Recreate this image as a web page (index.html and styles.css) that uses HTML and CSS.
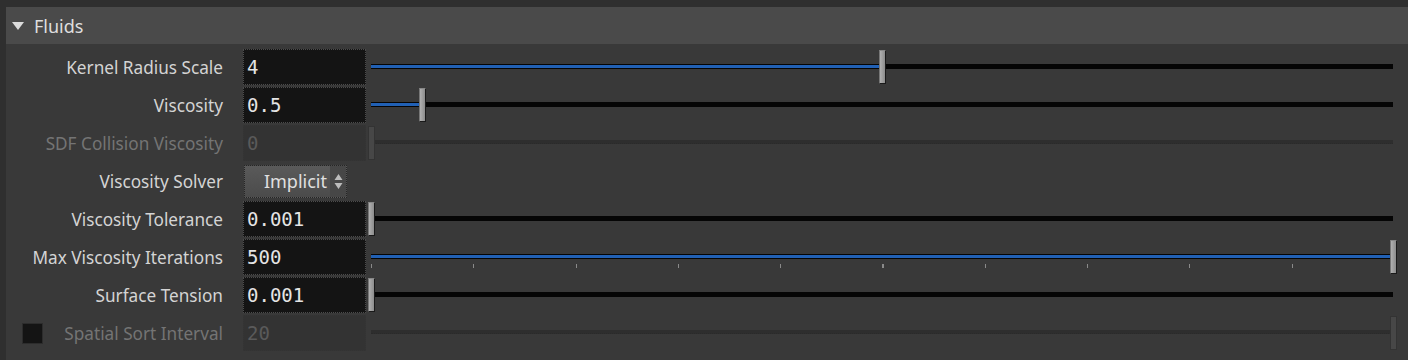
FILE: index.html
```html
<!DOCTYPE html>
<html lang="en">
<head>
    <meta charset="UTF-8">
    <title>Fluids</title>
    <link rel="stylesheet" href="styles.css">
</head>
<body>
    <div class="panel">
        <div class="folder-head">
            <span class="arrow"></span>
            <span class="folder-title">Fluids</span>
        </div>
        <div class="parms">
            <div class="row">
                <div class="label">Kernel Radius Scale</div>
                <div class="field">4</div>
                <div class="slider">
                    <div class="track"><div class="fill" style="width: 50%"></div></div>
                    <div class="handle" style="left: 50%"></div>
                </div>
            </div>
            <div class="row">
                <div class="label">Viscosity</div>
                <div class="field">0.5</div>
                <div class="slider">
                    <div class="track"><div class="fill" style="width: 5%"></div></div>
                    <div class="handle" style="left: 5%"></div>
                </div>
            </div>
            <div class="row disabled">
                <div class="label">SDF Collision Viscosity</div>
                <div class="field">0</div>
                <div class="slider">
                    <div class="track"></div>
                    <div class="handle" style="left: 0%"></div>
                </div>
            </div>
            <div class="row">
                <div class="label">Viscosity Solver</div>
                <div class="menu">
                    <span class="menu-text">Implicit</span>
                    <span class="menu-arrows">
                        <svg width="9" height="17" viewBox="0 0 9 17"><path d="M4.5 1 L8.5 7 L0.5 7 Z M4.5 16 L8.5 10 L0.5 10 Z" fill="#bcbcbc"/></svg>
                    </span>
                </div>
            </div>
            <div class="row">
                <div class="label">Viscosity Tolerance</div>
                <div class="field">0.001</div>
                <div class="slider">
                    <div class="track"></div>
                    <div class="handle" style="left: 0%"></div>
                </div>
            </div>
            <div class="row">
                <div class="label">Max Viscosity Iterations</div>
                <div class="field">500</div>
                <div class="slider">
                    <div class="track"><div class="fill" style="width: 100%"></div></div>
                    <div class="ticks"></div>
                    <div class="handle" style="left: 100%"></div>
                </div>
            </div>
            <div class="row">
                <div class="label">Surface Tension</div>
                <div class="field">0.001</div>
                <div class="slider">
                    <div class="track"></div>
                    <div class="handle" style="left: 0%"></div>
                </div>
            </div>
            <div class="row disabled">
                <div class="label">
                    <span class="checkbox"></span>
                    <span>Spatial Sort Interval</span>
                </div>
                <div class="field">20</div>
                <div class="slider">
                    <div class="track"></div>
                    <div class="handle" style="left: 100%"></div>
                </div>
            </div>
        </div>
    </div>
</body>
</html>
```

FILE: styles.css
```css
body {
    margin: 0;
    background-color: #2f2f2f;
    font-family: "Noto Sans", sans-serif;
    font-size: 17.2px;
    color: #d4d4d4;
    overflow: hidden;
}
.panel {
    padding-top: 7px;
    padding-left: 6px;
}
.folder-head {
    height: 37px;
    background-color: #4a4a4a;
    display: flex;
    align-items: center;
    padding-left: 6px;
}
.arrow {
    width: 0;
    height: 0;
    border-left: 6px solid transparent;
    border-right: 6px solid transparent;
    border-top: 8px solid #dcdcdc;
    margin-right: 10px;
}
.folder-title {
    color: #dedede;
    font-size: 18px;
}
.parms {
    background-color: #393939;
    padding-top: 4px;
    padding-bottom: 8px;
}
.row {
    height: 38px;
    display: flex;
    align-items: center;
}
.label {
    width: 217px;
    padding-right: 20px;
    display: flex;
    justify-content: flex-end;
    align-items: center;
    white-space: nowrap;
}
.field {
    width: 123px;
    height: 36px;
    box-sizing: border-box;
    background-color: #141414;
    border: 1px dotted #4c4c4c;
    font-family: "DejaVu Sans Mono", monospace;
    font-size: 19px;
    color: #e4e4e4;
    padding-left: 3px;
    line-height: 34px;
}
.slider {
    position: relative;
    flex: 1;
    height: 36px;
    margin-left: 5px;
    margin-right: 15px;
}
.track {
    position: absolute;
    left: 0;
    right: 0;
    top: 15px;
    height: 5px;
    background-color: #050505;
}
.fill {
    height: 3px;
    margin-top: 1px;
    background-color: #2160b4;
}
.ticks {
    position: absolute;
    left: 0;
    width: calc(100% + 1px);
    top: 25px;
    height: 4px;
    background: repeating-linear-gradient(to right, #8a8a8a 0 1px, transparent 1px 10%);
}
.handle {
    position: absolute;
    top: 1px;
    width: 5px;
    height: 32px;
    margin-left: -3px;
    background: linear-gradient(to right, #b0b0b0, #8c8c8c);
    border: 1px solid #1a1a1a;
    border-left-color: #777;
    border-top-color: #888;
}
.menu {
    width: 103px;
    height: 33px;
    box-sizing: border-box;
    margin-left: 1px;
    border: 1px dotted #262626;
    background: linear-gradient(#5a5a5a, #4b4b4b);
    display: flex;
    align-items: center;
    font-size: 18px;
    color: #e0e0e0;
}
.menu-text {
    flex: 1;
    text-align: right;
    padding-right: 3px;
}
.menu-arrows {
    width: 16px;
    height: 100%;
    display: flex;
    align-items: center;
    justify-content: center;
    background-color: #474747;
}
.disabled .label {
    color: #747474;
}
.disabled .field {
    background-color: #333333;
    border-color: #353535;
    color: #5a5a5a;
}
.disabled .track {
    background-color: #2e2e2e;
    border-bottom: 1px dotted #2a2a2a;
    height: 3px;
}
.disabled .handle {
    background: #474747;
    border-color: #333;
}
.checkbox {
    width: 19px;
    height: 19px;
    background-color: #141414;
    border: 1px solid #2c2c2c;
    margin-right: auto;
    margin-left: 16px;
}
```
